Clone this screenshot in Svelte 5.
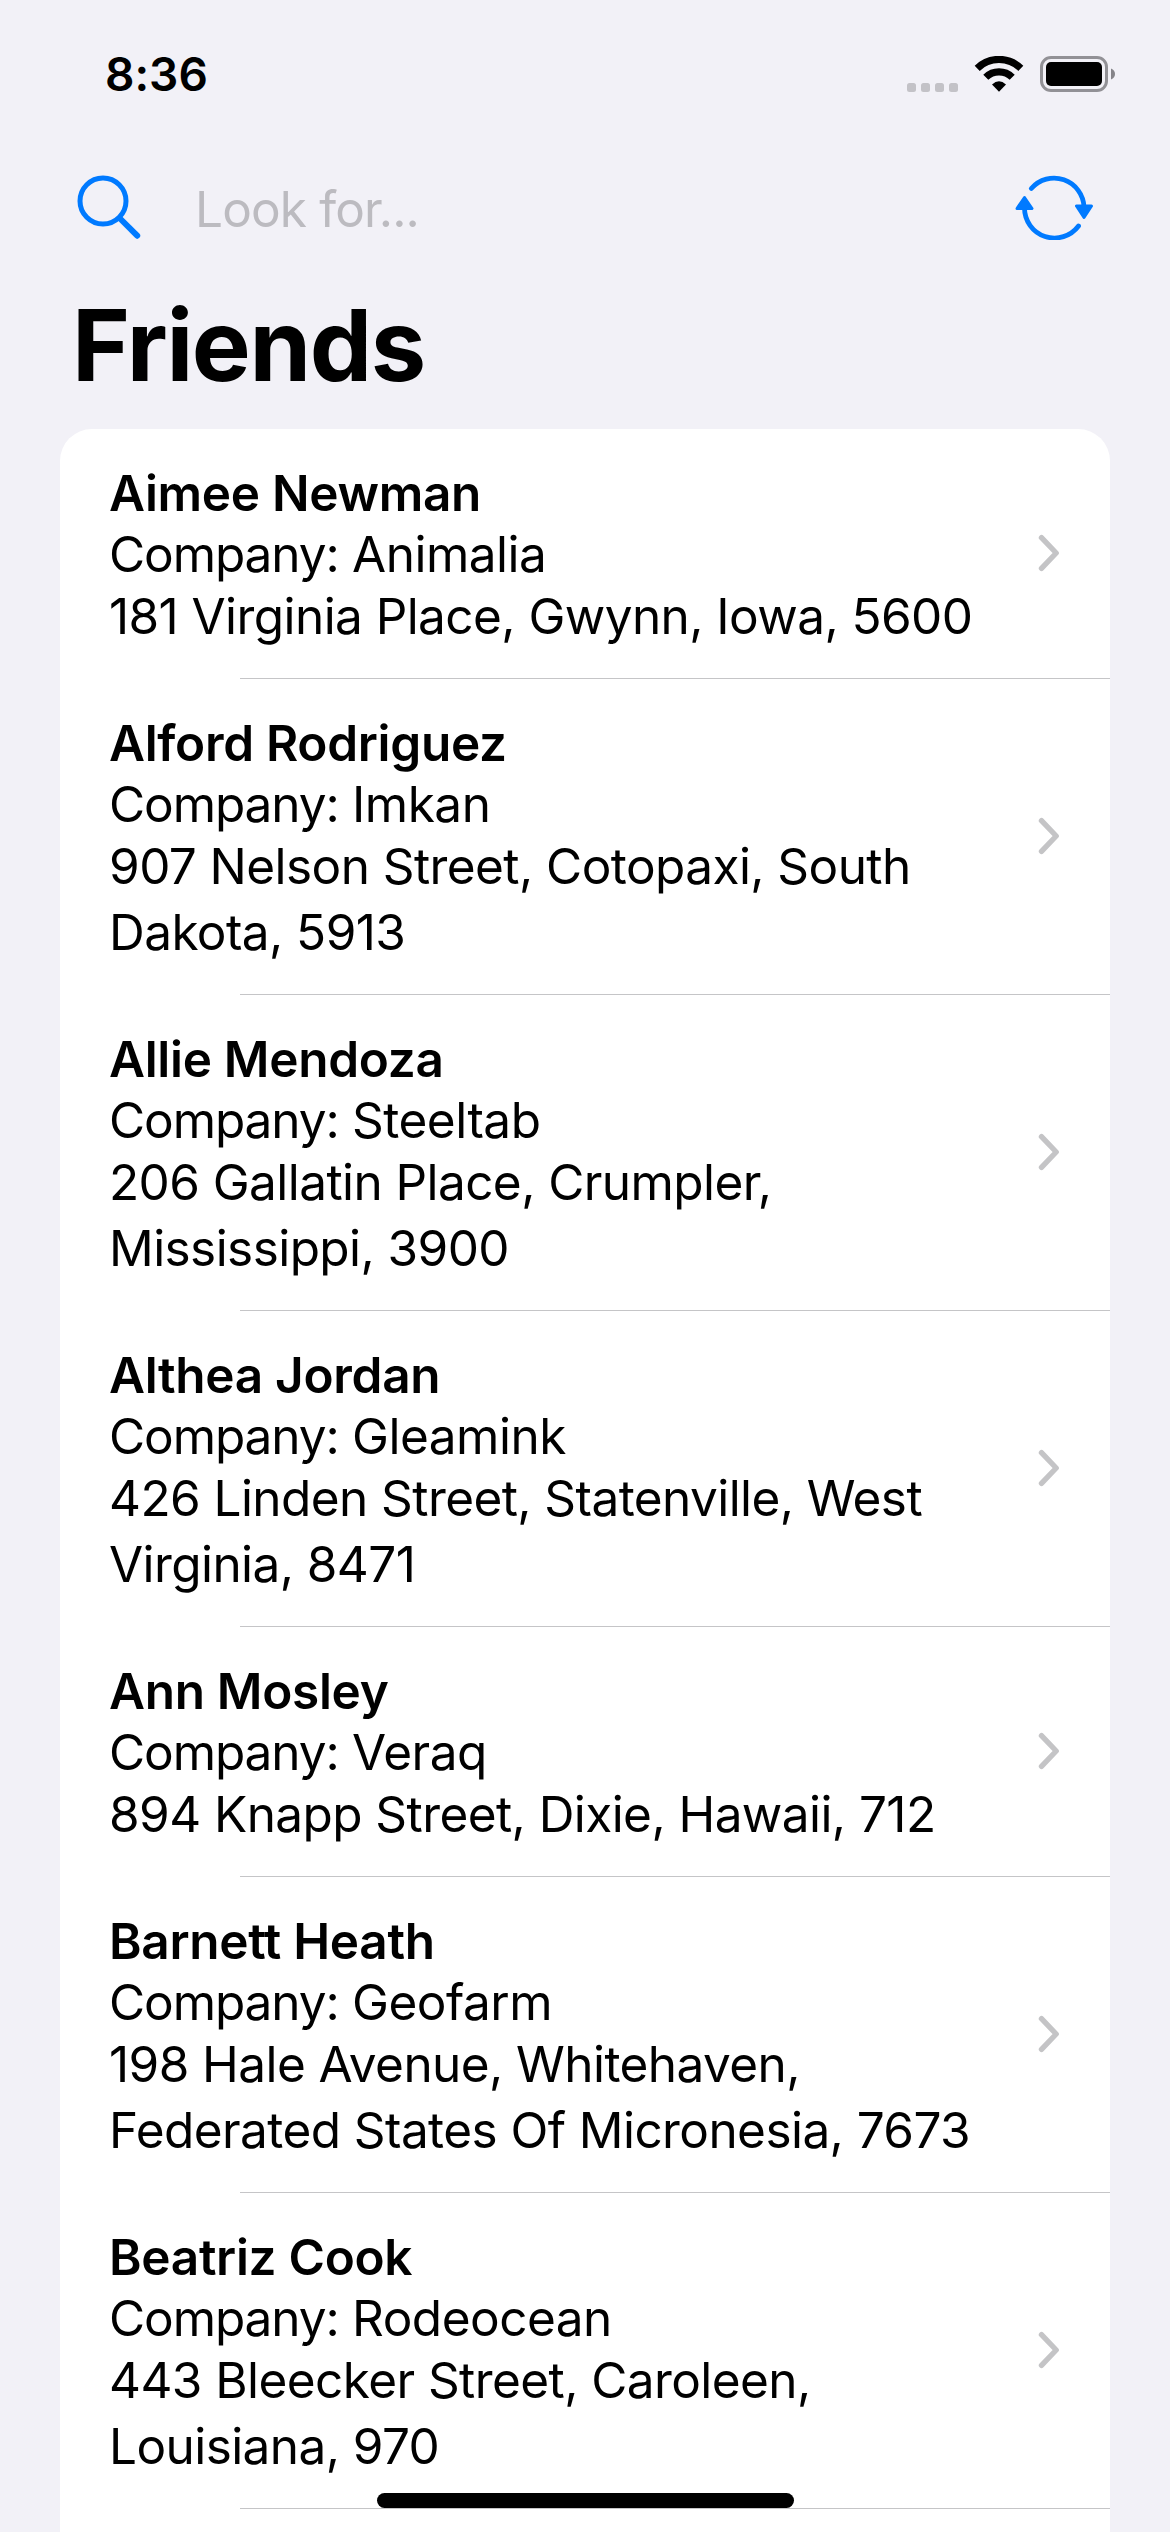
<script>
  const friends = [
    { name: 'Aimee Newman', company: 'Animalia', address: ['181 Virginia Place, Gwynn, Iowa, 5600'] },
    { name: 'Alford Rodriguez', company: 'Imkan', address: ['907 Nelson Street, Cotopaxi, South', 'Dakota, 5913'] },
    { name: 'Allie Mendoza', company: 'Steeltab', address: ['206 Gallatin Place, Crumpler,', 'Mississippi, 3900'] },
    { name: 'Althea Jordan', company: 'Gleamink', address: ['426 Linden Street, Statenville, West', 'Virginia, 8471'] },
    { name: 'Ann Mosley', company: 'Veraq', address: ['894 Knapp Street, Dixie, Hawaii, 712'] },
    { name: 'Barnett Heath', company: 'Geofarm', address: ['198 Hale Avenue, Whitehaven,', 'Federated States Of Micronesia, 7673'] },
    { name: 'Beatriz Cook', company: 'Rodeocean', address: ['443 Bleecker Street, Caroleen,', 'Louisiana, 970'] }
  ];
</script>

<div class="screen">
  <header class="status">
    <span class="time">8:36</span>
    <svg class="indicators" width="208" height="36" viewBox="0 0 208 36">
      <g fill="#c3c2c7">
        <rect x="0" y="27" width="9" height="9" rx="2.5" />
        <rect x="14" y="27" width="9" height="9" rx="2.5" />
        <rect x="28" y="27" width="9" height="9" rx="2.5" />
        <rect x="42" y="27" width="9" height="9" rx="2.5" />
      </g>
      <g fill="none" stroke="#000" stroke-width="7.2">
        <path d="M70.2 12.3A31.2 31.2 0 0 1 113.8 12.3" />
        <path d="M78.8 21.2A18.8 18.8 0 0 1 105.2 21.2" />
      </g>
      <path d="M85 28.4Q92 22 99 28.4L92 35.8Z" />
      <rect x="134.5" y="1.5" width="65" height="33" rx="9.5" fill="none" stroke="#929196" stroke-width="3" />
      <rect x="139" y="6" width="56" height="24" rx="5" />
      <path d="M204 12.5Q208 14.2 208 18T204 23.5Z" fill="#858489" />
    </svg>
  </header>

  <div class="search">
    <svg width="64" height="66" viewBox="0 0 64 66" fill="none" stroke="#007aff">
      <circle cx="26" cy="27" r="23" stroke-width="5" />
      <path d="M43 44.5L60.2 61.7" stroke-width="6" stroke-linecap="round" />
    </svg>
    <span class="placeholder">Look for...</span>
    <svg class="refresh" width="80" height="66" viewBox="0 0 80 66" fill="none" stroke="#007aff" stroke-linecap="round">
      <path d="M17.3 14.5A30 30 0 0 1 70 33" stroke-width="4.8" />
      <path d="M10.5 34A30 30 0 0 0 64.5 52" stroke-width="4.8" />
      <path d="M10.5 23.5L18 34.5H3Z M70 43.5L62.5 32H77.5Z" fill="#007aff" stroke-width="3" stroke-linejoin="round" />
    </svg>
  </div>

  <h1>Friends</h1>

  <ul class="card">
    {#each friends as friend}
      <li>
        <div class="info">
          <p class="name">{friend.name}</p>
          <p class="company"><span class="label">Company:</span> {friend.company}</p>
          <p class="address">
            {#each friend.address as line}<span>{line}</span>{/each}
          </p>
        </div>
        <svg class="chevron" width="22" height="38" viewBox="0 0 22 38">
          <path d="M3.5 3.7L18.2 19L3.5 34.3" fill="none" stroke="#c4c4c6" stroke-width="5.4" stroke-linecap="round" stroke-linejoin="round" />
        </svg>
      </li>
    {/each}
  </ul>

  <div class="home"></div>
</div>

<style>
  :global(body) {
    margin: 0;
    overflow: hidden;
    background: #f2f1f7;
  }
  .screen {
    position: relative;
    box-sizing: border-box;
    display: flex;
    flex-direction: column;
    width: 1170px;
    height: 2532px;
    overflow: hidden;
    background: #f2f1f7;
    color: #000;
    font-family: Inter, 'Liberation Sans', sans-serif;
    font-variant-ligatures: none;
  }
  svg {
    display: block;
    flex: none;
  }
  .status {
    box-sizing: border-box;
    display: flex;
    flex: none;
    justify-content: space-between;
    align-items: flex-start;
    height: 174px;
    padding: 56px 55px 0 105px;
  }
  .time {
    font-size: 46px;
    font-weight: 600;
    line-height: 36px;
  }
  .search {
    display: flex;
    flex: none;
    align-items: center;
    height: 66px;
    padding: 0 77px;
  }
  .placeholder {
    margin-left: 54px;
    padding-top: 3px;
    font-size: 49.5px;
    line-height: 66px;
    letter-spacing: -0.85px;
    color: #bcbbc0;
  }
  .refresh {
    margin-left: auto;
    margin-right: -1px;
  }
  h1 {
    flex: none;
    height: 120px;
    margin: 45px 0 24px;
    padding-left: 72px;
    font-size: 99px;
    font-weight: 700;
    line-height: 120px;
    letter-spacing: -1.4px;
  }
  .card {
    flex: none;
    margin: 0 60px;
    padding: 0;
    list-style: none;
    background: #fff;
    border-radius: 32px 32px 0 0;
  }
  li {
    display: flex;
    align-items: center;
    justify-content: space-between;
    padding: 33px 50px 30px 49px;
    background: linear-gradient(#c5c5c7, #c5c5c7) right bottom / 870px 1px no-repeat;
  }
  li:last-child {
    padding-bottom: 30px;
  }
  .chevron {
    margin-bottom: 5px;
  }
  p {
    margin: 0;
    font-size: 49.5px;
    white-space: nowrap;
    letter-spacing: -0.5px;
  }
  .name {
    font-weight: 600;
    line-height: 62px;
    letter-spacing: -0.3px;
  }
  .company {
    line-height: 61px;
  }
  .label {
    letter-spacing: -1.1px;
  }
  .address {
    margin-top: -2px;
    line-height: 66px;
    letter-spacing: -0.57px;
  }
  .address span {
    display: block;
  }
  /* White continuation of the card below the last visible row */
  .card::after {
    content: '';
    display: block;
    height: 30px;
  }
  .home {
    position: absolute;
    left: 377px;
    bottom: 24px;
    width: 417px;
    height: 15px;
    border-radius: 8px;
    background: #000;
  }
</style>
